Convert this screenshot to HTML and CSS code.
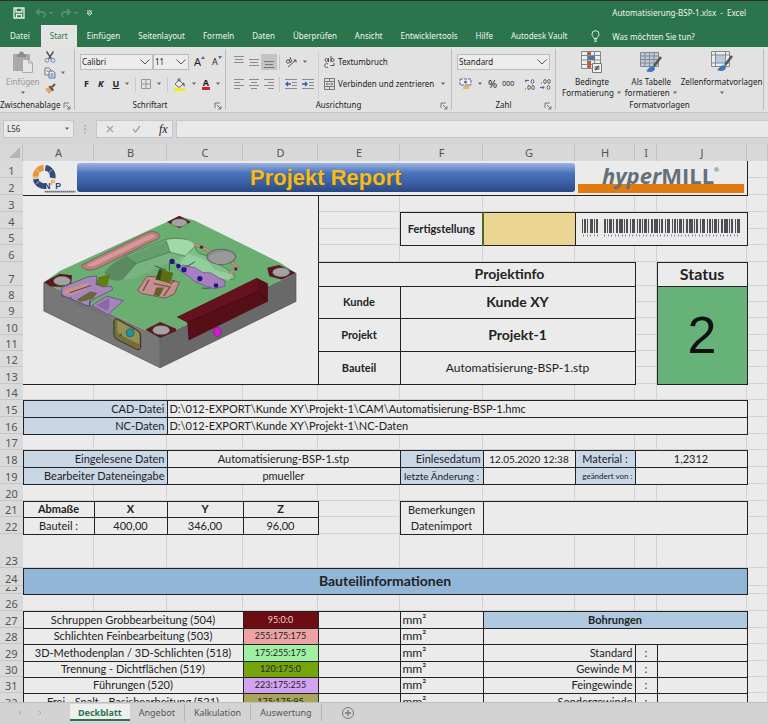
FILE: index.html
```html
<!DOCTYPE html>
<html lang="de">
<head>
<meta charset="utf-8">
<title>Automatisierung-BSP-1.xlsx - Excel</title>
<link rel="stylesheet" href="styles.css">
</head>
<body>
<svg class="defs" width="0" height="0" aria-hidden="true">
  <symbol id="chev" viewBox="0 0 10 6"><path d="M.5.5 5 5 9.500.5" fill="none" stroke="#555"/></symbol>
  <symbol id="drop" viewBox="0 0 6 4"><path d="M1 .5h4L3 3z" fill="#666"/></symbol>
  <symbol id="launch" viewBox="0 0 8 8"><path d="M1 6V1h5M3 3l4 4M7 4v3H4" fill="none" stroke="#777"/></symbol>
</svg>
<header class="top">
  <div class="title">
    <div class="quick">
      <button aria-label="Speichern"><svg width="12" height="12" viewBox="0 0 12 12"><path d="M1 1h10v10H1zM3 1v4h6V1M3.500 11V7.500h5V11" fill="none" stroke="#e8f0ea" stroke-width="1.300"/></svg></button>
      <button aria-label="Rückgängig"><svg width="18" height="10" viewBox="0 0 18 10"><path d="M4.500 1 1.500 4l3 3M1.500 4H7c4 0 4 4 1 5" fill="none" stroke="#5d9777" stroke-width="1.300"/><path d="M14 4h4l-2 2z" fill="#5d9777"/></svg></button>
      <button aria-label="Wiederholen"><svg width="18" height="10" viewBox="0 0 18 10"><path d="m7 1 3 3-3 3M10 4H5C1 4 1 8 3.500 9" fill="none" stroke="#5d9777" stroke-width="1.300"/><path d="M14 4h4l-2 2z" fill="#5d9777"/></svg></button>
      <button aria-label="Anpassen"><svg width="7" height="7" viewBox="0 0 7 7"><path d="M1 1h5M1 3h5L3.500 5.500z" fill="none" stroke="#dce9e0"/></svg></button>
    </div>
    <h1>Automatisierung-BSP-1.xlsx&nbsp; -&nbsp; Excel</h1>
  </div>
  <nav class="tabs">
    <a href="#">Datei</a><a href="#" class="on">Start</a><a href="#">Einfügen</a><a href="#">Seitenlayout</a><a href="#">Formeln</a><a href="#">Daten</a><a href="#">Überprüfen</a><a href="#">Ansicht</a><a href="#">Entwicklertools</a><a href="#">Hilfe</a><a href="#">Autodesk Vault</a>
    <a href="#" class="tell"><svg width="9" height="12" viewBox="0 0 9 12"><path d="M3 8.500C3 7 1 6.500 1 4.200a3.500 3.500 0 0 1 7 0C8 6.500 6 7 6 8.500zM3 10h3M3.500 11.500h2" fill="none" stroke="#e4efe8"/></svg>Was möchten Sie tun?</a>
  </nav>
</header>

<section class="ribbon">
  <div class="group clip">
    <div class="body">
      <button class="big dim"><svg width="22" height="23" viewBox="0 0 22 23"><path d="M1 3h17v17H1z" fill="#aaa"/><path d="M5 3h2a2.500 2.500 0 0 1 5 0h2v3H5z" fill="#8d8d8d"/><path d="M10.500 8.500H17l3.500 3.500v9.500h-10z" fill="#e6e6e6" stroke="#aaa"/><path d="M16.500 8.500V12H20" fill="none" stroke="#aaa"/></svg>Einfügen<svg class="dd" width="6" height="4"><use href="#drop"/></svg></button>
      <div class="stack">
        <button aria-label="Ausschneiden"><svg width="12" height="12" viewBox="0 0 12 12"><path d="m2.500.5 5 7.500M9.500.5 4.500 8" stroke="#555" stroke-width="1.400"/><circle cx="3" cy="9.300" r="2" fill="none" stroke="#6f8fb5"/><circle cx="9" cy="9.300" r="2" fill="none" stroke="#6f8fb5"/></svg></button>
        <button aria-label="Kopieren"><svg width="12" height="12" viewBox="0 0 12 12"><path d="M1 1h4l2 2v5H1z" fill="#eee" stroke="#777"/><path d="M5 4h4l2 2v5H5z" fill="#e4eaf2" stroke="#5b7594"/><path d="M6.500 7h3M6.500 9h3M2.500 4h2" stroke="#5b7594"/></svg><svg class="dd" width="6" height="4"><use href="#drop"/></svg></button>
        <button aria-label="Format übertragen"><svg width="12" height="12" viewBox="0 0 12 12"><path d="M1 6l4-2 3 4-3 3z" fill="#e9a35c"/><path d="m4.500 3.500 2-1 3.500 4-1.500 2z" fill="#555"/><path d="m8 4 3-3" stroke="#555" stroke-width="2"/></svg></button>
      </div>
    </div>
    <footer>Zwischenablage<button aria-label="Mehr"><svg width="8" height="8"><use href="#launch"/></svg></button></footer>
  </div>

  <div class="group font">
    <div class="body col">
      <div class="line">
        <div class="picks">
          <label class="pick name"><select aria-label="Schriftart"><option>Calibri</option></select><svg width="10" height="6"><use href="#chev"/></svg></label>
          <label class="pick size"><select aria-label="Schriftgrad"><option>11</option></select><svg width="10" height="6"><use href="#chev"/></svg></label>
        </div>
        <button class="grow" aria-label="Vergrößern">A<svg width="4" height="4" viewBox="0 0 4 4"><path d="M0 3h4L2 0z" fill="#4472a8"/></svg></button>
        <button class="grow less" aria-label="Verkleinern">A<svg width="4" height="4" viewBox="0 0 4 4"><path d="M0 0h4L2 3z" fill="#4472a8"/></svg></button>
      </div>
      <div class="line fmt">
        <button><b>F</b></button><button><b><i>K</i></b></button><button><b><u>U</u></b></button><svg class="dd" width="6" height="4"><use href="#drop"/></svg>
        <span class="sep"></span>
        <button aria-label="Rahmen"><svg width="10" height="10" viewBox="0 0 10 10"><path d="M.5.5h9v9h-9zM5 0v10M0 5h10" fill="none" stroke="#999"/></svg></button><svg class="dd" width="6" height="4"><use href="#drop"/></svg>
        <span class="sep"></span>
        <button aria-label="Füllfarbe"><svg width="13" height="13" viewBox="0 0 13 13"><path d="m2 6 4-4 4 4-4 3.500z" fill="#eee" stroke="#666"/><path d="M5 3V1h2v3" fill="none" stroke="#666"/><path d="M10 4c2 1 2 3 1.500 5L10 7z" fill="#5578a3"/><path d="M1 10h11v3H1z" fill="#f1ec1c"/></svg></button><svg class="dd" width="6" height="4"><use href="#drop"/></svg>
        <button class="tint" aria-label="Schriftfarbe">A</button><svg class="dd" width="6" height="4"><use href="#drop"/></svg>
      </div>
    </div>
    <footer>Schriftart<button aria-label="Mehr"><svg width="8" height="8"><use href="#launch"/></svg></button></footer>
  </div>

  <div class="group align">
    <div class="body">
      <div class="col left">
        <div class="line">
          <button aria-label="Oben"><svg width="10" height="12" viewBox="0 0 10 12"><path d="M0 .5h10M1 3.500h8M0 6.500h10" stroke="#8b8b8b"/></svg></button>
          <button aria-label="Mitte"><svg width="10" height="12" viewBox="0 0 10 12"><path d="M0 3.500h10M1 6.500h8M0 9.500h10" stroke="#8b8b8b"/></svg></button>
          <button class="held" aria-label="Unten"><svg width="10" height="12" viewBox="0 0 10 12"><path d="M0 5.500h10M1 8.500h8M0 11.500h10" stroke="#777"/></svg></button>
          <span class="sep"></span>
          <button aria-label="Ausrichtung"><svg width="12" height="12" viewBox="0 0 12 12"><circle cx="3" cy="5.500" r="1.700" fill="none" stroke="#555"/><path d="M4 3l1.500 4M5 1l2 5M3 11l8-7M8.500 4H11v2.500" fill="none" stroke="#555"/></svg></button><svg class="dd" width="6" height="4"><use href="#drop"/></svg>
        </div>
        <div class="line">
          <button aria-label="Linksbündig"><svg width="10" height="10" viewBox="0 0 10 10"><path d="M0 .5h10M0 3.500h6M0 6.500h10M0 9.500h6" stroke="#8b8b8b"/></svg></button>
          <button aria-label="Zentriert"><svg width="10" height="10" viewBox="0 0 10 10"><path d="M0 .5h10M2 3.500h6M0 6.500h10M2 9.500h6" stroke="#8b8b8b"/></svg></button>
          <button aria-label="Rechtsbündig"><svg width="10" height="10" viewBox="0 0 10 10"><path d="M0 .5h10M4 3.500h6M0 6.500h10M4 9.500h6" stroke="#8b8b8b"/></svg></button>
          <span class="sep"></span>
          <button aria-label="Einzug verkleinern"><svg width="12" height="10" viewBox="0 0 12 10"><path d="M0 .5h12M7 3.500h5M7 6.500h5M0 9.500h12" stroke="#8b8b8b"/><path d="M6 5H1m2-2L1 5l2 2" fill="none" stroke="#35619c" stroke-width="1.300"/></svg></button>
          <button aria-label="Einzug vergrößern"><svg width="12" height="10" viewBox="0 0 12 10"><path d="M0 .5h12M7 3.500h5M7 6.500h5M0 9.500h12" stroke="#8b8b8b"/><path d="M0 5h5M3 3l2 2-2 2" fill="none" stroke="#35619c" stroke-width="1.300"/></svg></button>
        </div>
      </div>
      <div class="col right">
        <button class="text"><svg width="11" height="12" viewBox="0 0 11 12"><circle cx="2.500" cy="4" r="1.500" fill="none" stroke="#555"/><path d="M4.500 2v4M7 0v6M4 8a2 2 0 1 0 0 3M10 7v2.500H6.500" fill="none" stroke="#555"/><circle cx="8.500" cy="4" r="1.500" fill="none" stroke="#555"/></svg>Textumbruch</button>
        <button class="text"><svg width="11" height="12" viewBox="0 0 11 12"><path d="M.5.5h10v11H.5zM0 3.500h11M0 8.500h11M5.500 0v3M5.500 9v3M2 6h7M3.500 4.800 2 6l1.500 1.200M7.500 4.800 9 6 7.500 7.200" fill="none" stroke="#777"/></svg>Verbinden und zentrieren<svg class="dd" width="6" height="4"><use href="#drop"/></svg></button>
      </div>
    </div>
    <footer>Ausrichtung<button aria-label="Mehr"><svg width="8" height="8"><use href="#launch"/></svg></button></footer>
  </div>

  <div class="group number">
    <div class="body col">
      <div class="line"><label class="pick std"><select aria-label="Zahlenformat"><option>Standard</option></select><svg width="10" height="6"><use href="#chev"/></svg></label></div>
      <div class="line nums">
        <button aria-label="Währung"><svg width="13" height="12" viewBox="0 0 13 12"><path d="M1 1h11v6H1z" fill="#eef2f7" stroke="#4a6f9f" stroke-dasharray="3 1"/><circle cx="6.500" cy="4" r="1.500" fill="#4a6f9f"/><path d="M5 8h5M4 10h5M9 6v5" stroke="#e3a867" stroke-width="1.600"/></svg></button><svg class="dd" width="6" height="4"><use href="#drop"/></svg>
        <button class="pct">%</button><button class="tri">000</button><span class="sep"></span>
        <button class="dec" aria-label="Dezimalstelle hinzufügen"><svg width="11" height="11" viewBox="0 0 11 11"><path d="M5 1.500H1m1.500-1L1 2l1.500 1" fill="none" stroke="#3d6ba6"/><g fill="none" stroke="#666"><ellipse cx="8.500" cy="2.500" rx="1.300" ry="2"/><ellipse cx="5" cy="8.500" rx="1.300" ry="2"/><ellipse cx="9" cy="8.500" rx="1.300" ry="2"/></g><path d="M1 10h1" stroke="#666"/></svg></button>
        <button class="dec" aria-label="Dezimalstelle entfernen"><svg width="11" height="11" viewBox="0 0 11 11"><path d="M0 8.500h4M2.500 7 4 8.500 2.500 10" fill="none" stroke="#3d6ba6"/><g fill="none" stroke="#666"><ellipse cx="8.500" cy="8.500" rx="1.300" ry="2"/><ellipse cx="5" cy="2.500" rx="1.300" ry="2"/><ellipse cx="9" cy="2.500" rx="1.300" ry="2"/></g><path d="M1 4h1" stroke="#666"/></svg></button>
      </div>
    </div>
    <footer>Zahl<button aria-label="Mehr"><svg width="8" height="8"><use href="#launch"/></svg></button></footer>
  </div>

  <div class="group styles">
    <div class="body">
      <button class="big"><svg width="22" height="23" viewBox="0 0 22 23"><path d="M.5.5h19v17H.5zM6.500 0v18M13.500 0v18M0 4.500h20M0 9h20M0 13.500h20" fill="#eee" stroke="#888"/><path d="M7 1h3v3H7zM7 10h3v7H7z" fill="#c5573f"/><path d="M7 5h7v4H7z" fill="#4a76a8"/><path d="M11.500 12.500h9v9h-9z" fill="#f2f2f2" stroke="#777"/><path d="M13.500 16h5M13.500 18h5M17.500 14.500l-3 5" stroke="#333"/></svg>Bedingte<span>Formatierung<svg class="dd" width="6" height="4"><use href="#drop"/></svg></span></button>
      <button class="big"><svg width="22" height="23" viewBox="0 0 22 23"><path d="M.5 1.500h18v14H.5z" fill="#b8cbe0"/><path d="M.5 1.500h18v14H.5zM5 1v15M9.500 1v15M14 1v15M0 5h19M0 8.500h19M0 12h19" fill="none" stroke="#888"/><path d="m21 6-7 9" stroke="#555" stroke-width="2.500"/><path d="M6 20c2-1 3-5 7-5l2 2c0 4-5 5-9 3z" fill="#3f76b8"/></svg>Als Tabelle<span>formatieren<svg class="dd" width="6" height="4"><use href="#drop"/></svg></span></button>
      <button class="big"><svg width="22" height="23" viewBox="0 0 22 23"><path d="M.5.5h18v15H.5z" fill="#eee"/><path d="M5 4h10v8H5z" fill="#b8cbe0"/><path d="M.5.500h18v15H.5zM4.500 0v16M14.500 0v16M0 4h19M0 12h19" fill="none" stroke="#888"/><path d="m21 5-7 9" stroke="#555" stroke-width="2.500"/><path d="M6 19c2-1 3-5 7-5l2 2c0 4-5 5-9 3z" fill="#3f76b8"/></svg>Zellenformatvorlagen<svg class="dd" width="6" height="4"><use href="#drop"/></svg></button>
    </div>
    <footer>Formatvorlagen</footer>
  </div>
</section>

<section class="formula">
  <label class="ref"><input aria-label="Namenfeld" value="L56"><svg width="6" height="4"><use href="#drop"/></svg></label>
  <svg class="dots" width="2" height="10" viewBox="0 0 2 10"><path d="M1 1v8" stroke="#999" stroke-width="1.500" stroke-dasharray="1.500 2"/></svg>
  <div class="ops">
    <button aria-label="Abbrechen"><svg width="8" height="8" viewBox="0 0 8 8"><path d="m1 1 6 6M7 1 1 7" stroke="#a3a3a3" stroke-width="1.300"/></svg></button>
    <button aria-label="Eingeben"><svg width="9" height="8" viewBox="0 0 9 8"><path d="m1 4 2.500 3L8 1" fill="none" stroke="#a3a3a3" stroke-width="1.300"/></svg></button>
    <button class="fx"><i>fx</i></button>
  </div>
  <input class="bar" aria-label="Bearbeitungsleiste">
</section>

<main class="sheet">
<table>
<colgroup><col class="w0"><col class="wa"><col class="wb"><col class="wc"><col class="wd"><col class="we"><col class="wf"><col class="wg"><col class="wh"><col class="wi"><col class="wj"><col></colgroup>
<thead><tr><th><svg width="11" height="11" viewBox="0 0 11 11"><path d="M11 0v11H0z" fill="#b5b5b5"/></svg></th><th>A</th><th>B</th><th>C</th><th>D</th><th>E</th><th>F</th><th>G</th><th>H</th><th>I</th><th>J</th><th></th></tr></thead>
<tbody>
<tr class="h17"><th>1</th><td class="b masthead" colspan="10" rowspan="2">
  <div class="mast">
    <svg class="logo" width="46" height="30" viewBox="0 0 138 90"><g fill="none" stroke-width="17"><path d="M17 45A27 27 0 0 1 42 14" stroke="#e8953a"/><path d="M46 14A27 27 0 0 1 68 45" stroke="#354b80"/><path d="M17 48A27 27 0 0 0 48 69" stroke="#354b80"/></g><path d="M8 42h18M42 5v18M18 19l14 14M66 20 54 32M18 64l12-12" stroke="#f0f0f0" stroke-width="2"/><text x="43" y="78" class="lg">N</text><text x="62" y="67" class="lp">P</text><text x="76" y="78" class="lg">P</text><path d="M44 86h92" stroke="#666d80" stroke-width="5" stroke-dasharray="5 1"/></svg>
    <h2>Projekt Report</h2>
    <div class="hyper"><span><i>hyper</i>MILL<sup>®</sup></span></div>
  </div></td><td></td></tr>
<tr class="h17"><th>2</th><td></td></tr>
<tr class="h17"><th>3</th><td class="b model" colspan="4" rowspan="11">
<svg viewBox="70 166 885 563" role="img" aria-label="Bauteil">
<path d="M130 424 482 590V683L130 511z" fill="#777"/>
<path d="M482 590 893 396V482L482 683z" fill="#696969"/>
<path d="M130 424 178 390 540 224 586 237 845 365 893 396 482 590z" fill="#6aae72"/>
<path d="M130 424 178 398 215 403 213 427 185 438 150 437zM503 242 540 223 575 242 540 260zM806 380 842 372 893 396 850 416 812 406zM437 568 482 544 530 565 530 572 482 593z" fill="#5c1720"/>
<g fill="#a3a3a3" stroke="#444"><ellipse cx="185" cy="420" rx="26" ry="14"/><ellipse cx="540" cy="244" rx="24" ry="12"/><ellipse cx="848" cy="394" rx="26" ry="14"/><ellipse cx="485" cy="569" rx="26" ry="14"/></g>
<path d="M246 371 440 275c20-10 42-1 41 10-2 8-10 10-20 14L288 384c-20 8-48 0-42-13z" fill="#b97f80" stroke="#6d4c4c" stroke-width="2"/>
<path d="M260 372 448 281c10-3 20 0 18 6L285 374c-10 4-20 3-25-2z" fill="#d59a98"/>
<path d="M316 395c10-20 40-35 70-55l110-45c40-12 90 4 92 20 2 20 10 22 38 30l26 22c20 8 40 20 54 35 6 10-4 16-20 14l-40-6-120-44-40-2-96 44c-40 16-70 10-74-13z" fill="#7fbf88" stroke="#3f6b46" stroke-width="2"/>
<path d="M316 395c10-20 40-38 62-48l32 20-44 50c-26 4-46-4-50-22z" fill="#5b8a62"/>
<path d="M378 347 500 297l12 36-102 34z" fill="#659f6d"/>
<path d="m410 367 102-34 46 12-60 24-90 42-44 6z" fill="#78b381"/>
<path d="M500 297c40-10 84 0 88 16l-30 32-46-12z" fill="#a1d9a8"/>
<path d="m378 347 32 20-44 50M410 367l102-34-12-36M512 333l46 12 30-30" fill="none" stroke="#416e49" stroke-width="2"/>
<path d="M566 336 624 360 650 388 700 400 690 420 600 392 540 372z" fill="#9bd2a2" opacity=".8"/>
<path d="m534 384 16-12 38 8 22 14 26 2 22 14 20 10 0 16-34 8-28-10-32-14-18-16z" fill="#a87fc0" stroke="#6e4c86" stroke-width="2"/>
<path d="m584 307 36 16 14 10M700 364l16 14-10 14-18 2" fill="none" stroke="#9d7368" stroke-width="9"/>
<path d="m584 307 36 16 14 10M700 364l16 14-10 14-18 2" fill="none" stroke="#bc9185" stroke-width="6"/>
<ellipse cx="667" cy="347" rx="44" ry="23" fill="#8d8d8d" stroke="#444" stroke-width="2"/>
<path d="M630 350c5-18 70-26 76-4-4 28-68 32-76 4z" fill="#999"/>
<g fill="#1b1a7a"><circle cx="518" cy="361" r="8"/><circle cx="537" cy="375" r="7"/><circle cx="554" cy="386" r="8"/><circle cx="602" cy="413" r="8"/><circle cx="651" cy="434" r="7"/></g><circle cx="607" cy="318" r="5" fill="#333"/><circle cx="711" cy="384" r="5" fill="#333"/>
<path d="m466 375 34 12M510 368v22M588 362l-36 20M608 442h26" stroke="#355" stroke-width="3"/>
<path d="m414 448 28-42 34 2 64 16-16 36-28 12-70-14z" fill="#c58f8e" stroke="#603838" stroke-width="2"/>
<path d="m430 450 18-34M512 430l14-12M492 466l20-28-50-10" fill="none" stroke="#7b4c4c" stroke-width="4"/>
<path d="m470 440 24 0-14 26-18-2z" fill="#65612d"/>
<path d="m480 384 42 12-10 32-44-12z" fill="#596d12"/><path d="m480 384 8 2-6 32-14-2z" fill="#38480f"/>
<path d="m296 410 32-8-6 30-20 8-14-8z" fill="#657d11" stroke="#405008"/>
<path d="M184 440 262 408 290 405 288 430 310 438 335 436 338 446 268 482 268 500 184 464z" fill="#a785bd" stroke="#53405f" stroke-width="2"/>
<path d="m192 446 66-20 14 10-60 28-24-6z" fill="#c89189"/><path d="m230 476 40-24 22 4-14 18-38 10z" fill="#686936"/>
<path d="m208 456 64-22M184 464l84 34 2-18M212 468l-2 8" fill="none" stroke="#4f3b59" stroke-width="3"/>
<path d="m276 494 44-28 50 14-46 42z" fill="#a584bd" stroke="#5b4270" stroke-width="2"/><path d="m288 494 40-22 0 30-8 8z" fill="#8a68a2"/>
<path d="M184 464 268 498 276 494 324 522 324 530 230 494z" fill="#727272"/>
<path d="M342 542q2-10 12-6l60 34q10 6 9 16v34q-2 12-14 6l-56-28q-12-6-11-16z" fill="#736f3a" stroke="#33321d" stroke-width="3"/>
<path d="m352 540 60 32q8 6 7 14v26l-58-28q-10-6-9-16z" fill="#949055"/>
<circle cx="391" cy="577" r="12" fill="#21939b" stroke="#175057" stroke-width="2"/><circle cx="362" cy="584" r="4" fill="#55522a"/>
<path d="M533 529 775 411 808 428V482L568 600 564 546z" fill="#560e17"/>
<path d="m533 529 32 17 210-92V411z" fill="#63121e"/><path d="M565 546 775 454 808 478" fill="none" stroke="#38080e" stroke-width="2"/>
<ellipse cx="655" cy="574" rx="12" ry="14" fill="#d21cc6" stroke="#861583" stroke-width="2"/>
<path d="M130 424V511L482 683 893 482V396M482 590v93" fill="none" stroke="#4c4c4c" stroke-width="2"/>
</svg></td><td></td><td></td><td></td><td></td><td></td><td></td><td></td></tr>
<tr class="h17"><th>4</th><td></td><td class="b c" rowspan="2"><b>Fertigstellung</b></td><td class="b gold" rowspan="2"></td><td class="b c" colspan="3" rowspan="2"><svg class="code" width="158" height="19" viewBox="0 0 158 19"><g stroke="#33343b" opacity=".85"><path d="M0 7h16" stroke-width="14" stroke-dasharray="1 1 2 1 1 2 3 1"/><path d="M22 7h136" stroke-width="14" stroke-dasharray="2 1 1 1 3 1 1 2 2 1 4 1 1 1 2 2 1 1 3 2 1 1"/><path d="M1 16.500h16M22 16.500h136" stroke-width="2" stroke-dasharray="1 3 1 2" opacity=".6"/></g></svg></td><td></td></tr>
<tr class="h16"><th>5</th><td></td><td></td></tr>
<tr class="h17"><th>6</th><td></td><td></td><td></td><td></td><td></td><td></td><td></td></tr>
<tr class="h24"><th>7</th><td class="b c m info" colspan="4"><b>Projektinfo</b></td><td></td><td class="b c l"><b>Status</b></td><td></td></tr>
<tr class="h16"><th>8</th><td class="b c" rowspan="2"><b>Kunde</b></td><td class="b c m" colspan="3" rowspan="2"><b>Kunde XY</b></td><td></td><td class="b c two" rowspan="6">2</td><td></td></tr>
<tr class="h16"><th>9</th><td></td><td></td></tr>
<tr class="h17"><th>10</th><td class="b c" rowspan="2"><b>Projekt</b></td><td class="b c m" colspan="3" rowspan="2"><b>Projekt-1</b></td><td></td><td></td></tr>
<tr class="h16"><th>11</th><td></td><td></td></tr>
<tr class="h16"><th>12</th><td class="b c" rowspan="2"><b>Bauteil</b></td><td class="b c n" colspan="3" rowspan="2">Automatisierung-BSP-1.stp</td><td></td><td></td></tr>
<tr class="h17"><th>13</th><td></td><td></td></tr>
<tr class="h16"><th>14</th><td></td><td></td><td></td><td></td><td></td><td></td><td></td><td></td><td></td><td></td><td></td></tr>
<tr class="h17"><th>15</th><td class="b r blue" colspan="2">CAD-Datei</td><td class="b" colspan="8">D:\012-EXPORT\Kunde XY\Projekt-1\CAM\Automatisierung-BSP-1.hmc</td><td></td></tr>
<tr class="h17"><th>16</th><td class="b r blue" colspan="2">NC-Daten</td><td class="b" colspan="8">D:\012-EXPORT\Kunde XY\Projekt-1\NC-Daten</td><td></td></tr>
<tr class="h16"><th>17</th><td></td><td></td><td></td><td></td><td></td><td></td><td></td><td></td><td></td><td></td><td></td></tr>
<tr class="h17"><th>18</th><td class="b r blue" colspan="2">Eingelesene Daten</td><td class="b c" colspan="3">Automatisierung-BSP-1.stp</td><td class="b r blue">Einlesedatum</td><td class="b c date">12.05.2020 12:38</td><td class="b c blue">Material :</td><td class="b c" colspan="2">1,2312</td><td></td></tr>
<tr class="h17"><th>19</th><td class="b r blue" colspan="2">Bearbeiter Dateneingabe</td><td class="b c" colspan="3">pmueller</td><td class="b c blue date">letzte Änderung :</td><td class="b"></td><td class="b r blue tiny">geändert von :</td><td class="b" colspan="2"></td><td></td></tr>
<tr class="h17"><th>20</th><td></td><td></td><td></td><td></td><td></td><td></td><td></td><td></td><td></td><td></td><td></td></tr>
<tr class="h16"><th>21</th><td class="b c"><b>Abmaße</b></td><td class="b c"><b>X</b></td><td class="b c"><b>Y</b></td><td class="b c"><b>Z</b></td><td></td><td class="b c two-line" rowspan="2">Bemerkungen Datenimport</td><td class="b" colspan="4" rowspan="2"></td><td></td></tr>
<tr class="h17"><th>22</th><td class="b c">Bauteil :</td><td class="b c">400,00</td><td class="b c">346,00</td><td class="b c">96,00</td><td></td><td></td></tr>
<tr class="h34"><th>23</th><td></td><td></td><td></td><td></td><td></td><td></td><td></td><td></td><td></td><td></td><td></td></tr>
<tr class="h18"><th>24</th><td class="b c m deep" colspan="10" rowspan="2"><b>Bauteilinformationen</b></td><td></td></tr>
<tr class="h8"><th><span class="cut">25</span></th><td></td></tr>
<tr class="h17"><th>26</th><td></td><td></td><td></td><td></td><td></td><td></td><td></td><td></td><td></td><td></td><td></td></tr>
<tr class="h17"><th>27</th><td class="b c" colspan="3">Schruppen Grobbearbeitung (504)</td><td class="b c s k1">95:0:0</td><td class="b"></td><td class="b n">mm²</td><td class="b c blue2" colspan="4"><b>Bohrungen</b></td><td></td></tr>
<tr class="h16"><th>28</th><td class="b c" colspan="3">Schlichten Feinbearbeitung (503)</td><td class="b c s k2">255:175:175</td><td class="b"></td><td class="b n">mm²</td><td class="b" colspan="4"></td><td></td></tr>
<tr class="h17"><th>29</th><td class="b c" colspan="3">3D-Methodenplan / 3D-Schlichten (518)</td><td class="b c s k3">175:255:175</td><td class="b"></td><td class="b n">mm²</td><td class="b r" colspan="2">Standard</td><td class="b c">:</td><td class="b"></td><td></td></tr>
<tr class="h16"><th>30</th><td class="b c" colspan="3">Trennung - Dichtflächen (519)</td><td class="b c s k4">120:175:0</td><td class="b"></td><td class="b n">mm²</td><td class="b r" colspan="2">Gewinde M</td><td class="b c">:</td><td class="b"></td><td></td></tr>
<tr class="h16"><th>31</th><td class="b c" colspan="3">Führungen (520)</td><td class="b c s k5">223:175:255</td><td class="b"></td><td class="b n">mm²</td><td class="b r" colspan="2">Feingewinde</td><td class="b c">:</td><td class="b"></td><td></td></tr>
<tr class="h17"><th>32</th><td class="b c" colspan="3">Frei - Spalt - Basisbearbeitung (521)</td><td class="b c s k6">175:175:95</td><td class="b"></td><td class="b n">mm²</td><td class="b r" colspan="2">Sondergewinde</td><td class="b c">:</td><td class="b"></td><td></td></tr>
</tbody>
</table>
</main>

<nav class="sheets">
  <div class="arrows"><button aria-label="Zurück"><svg width="4" height="6" viewBox="0 0 4 6"><path d="M3 1 1 3l2 2" fill="none" stroke="#aaa"/></svg></button><button aria-label="Weiter"><svg width="4" height="6" viewBox="0 0 4 6"><path d="m1 1 2 2-2 2" fill="none" stroke="#aaa"/></svg></button></div>
  <a href="#" class="on">Deckblatt</a><a href="#">Angebot</a><a href="#">Kalkulation</a><a href="#">Auswertung</a>
  <button class="add" aria-label="Neues Blatt"><svg width="12" height="12" viewBox="0 0 12 12"><circle cx="6" cy="6" r="5.500" fill="none" stroke="#777"/><path d="M6 3v6M3 6h6" stroke="#777" stroke-width="1.300"/></svg></button>
</nav>
</body>
</html>
```
FILE: styles.css
```css
* { box-sizing: border-box; }
body {
  margin: 0;
  height: 100vh;
  display: flex;
  flex-direction: column;
  overflow: hidden;
  background: #d6d6d6;
  color: #222;
  font: 8px/12px "Noto Sans", "Open Sans", sans-serif;
}
.defs { position: absolute; }
button { border: 0; padding: 0; background: none; font: inherit; color: inherit; }
a { color: inherit; text-decoration: none; }
svg { display: block; flex: none; }

/* title bar and ribbon tabs */
.top { background: #2b744c; color: #eef6f0; border-top: 1px solid #2e2e2e; }
.title { display: flex; justify-content: space-between; align-items: center; height: 24px; padding: 0 22px 0 13px; }
.title h1 { margin: 0; font-size: 8px; font-weight: 400; }
.quick { display: flex; align-items: center; gap: 7px; }
.quick button:nth-child(2) { margin-left: 3px; }
.quick button:last-child { margin-left: 1px; }
.tabs { display: flex; height: 22px; line-height: 21px; padding-left: 1px; }
.tabs a { padding: 0 9px; white-space: nowrap; }
.tabs .on { background: #e4e4e4; color: #2b744c; margin: 0 1px 0 2px; }
.tabs .tell { display: flex; align-items: center; gap: 12px; margin-left: 6px; }

/* ribbon */
.ribbon { display: flex; height: 66px; background: #e2e2e2; border-bottom: 1px solid #c8c8c8; }
.group { display: flex; flex-direction: column; position: relative; margin: 2px 0; border-right: 1px solid #bdbdbd; }
.body { display: flex; flex: 1; min-height: 0; }
.col { display: flex; flex-direction: column; }
.line { display: flex; align-items: center; height: 22px; }
.group footer { display: flex; justify-content: center; height: 11px; }
.group footer button { position: absolute; right: 3px; bottom: 0; }
.sep { width: 1px; height: 15px; background: #c8c8c8; }
.clip { width: 75px; }
.font { width: 151px; }
.align { width: 226px; }
.number { width: 104px; }
.styles { width: 208px; }
.clip footer { justify-content: flex-start; }
.clip .body { padding: 2px 0 0 6px; gap: 4px; }
.big { display: flex; flex-direction: column; align-items: center; white-space: nowrap; line-height: 11px; }
.big > svg:first-child { margin-bottom: 2px; }
.big span { display: flex; align-items: center; gap: 2px; }
.big > .dd { margin-top: 4px; }
.dim { color: #999; }
.stack { display: flex; flex-direction: column; gap: 4px; }
.stack button { display: flex; align-items: center; gap: 4px; }
.font .body { padding: 2px 0 0 5px; }
.picks { display: flex; }
.pick { display: flex; align-items: center; height: 16px; border: 1px solid #bcbcbc; background: #ececec; padding: 0 2px 0 1px; }
.pick select { flex: 1; min-width: 0; appearance: none; border: 0; padding: 0; background: none; font: inherit; color: inherit; }
.name { width: 73px; }
.size { width: 36px; }
.grow { display: flex; margin-left: 5px; font-size: 11px; }
.less { font-size: 9px; margin-left: 7px; }
.fmt { padding: 0 4px; gap: 5px; font-size: 9px; }
.fmt button:nth-child(2), .fmt button:nth-child(3) { margin-left: 4px; }
.fmt .tint { font-weight: 700; line-height: 9px; width: 11px; border-bottom: 3px solid #d8202a; }
.align .body { padding-top: 2px; }
.left { flex: none; width: 93px; padding-left: 8px; border-right: 1px solid #d0d0d0; }
.left .line { gap: 5px; }
.left .held { background: #c3c3c3; padding: 2px 3px; margin: 0 -3px; }
.right { padding-left: 5px; }
.text { display: flex; align-items: center; gap: 3px; height: 22px; white-space: nowrap; }
.text .dd { margin-left: 3px; }
.number .body { padding: 2px 5px 0; }
.std { flex: 1; }
.nums { gap: 5px; padding-left: 2px; }
.pct { font-size: 11px; }
.tri { font-size: 7px; }
.styles .body { padding: 2px 0 0 6px; gap: 3px; }

/* formula bar */
.formula { display: flex; align-items: center; height: 31px; padding: 0 0 0 3px; }
.ref, .ops, .bar { height: 18px; background: #e9e9e9; border: 1px solid #c6c6c6; }
.ref { display: flex; align-items: center; width: 71px; padding: 0 3px; }
.ref input { flex: 1; min-width: 0; border: 0; padding: 0; background: none; font: inherit; color: #333; }
.dots { margin: 0 10px; }
.ops { display: flex; align-items: center; gap: 18px; width: 77px; padding: 0 9px; }
.fx { font: 12px/12px "Liberation Serif", serif; }
.bar { flex: 1; min-width: 0; margin-left: 3px; border-right: 0; padding: 0 4px; }

/* worksheet */
.sheet { flex: 1; min-height: 0; overflow: hidden; background: #ebebeb; }
.sheet table { width: 100%; table-layout: fixed; border-collapse: collapse; font: 11px/14px Lato, "Open Sans", sans-serif; }
.w0 { width: 23px; } .wa { width: 71px; } .wb { width: 73px; } .wc { width: 76px; }
.wd { width: 75px; } .we { width: 82px; } .wf { width: 83px; } .wg { width: 92px; }
.wh { width: 60px; } .wi { width: 22px; } .wj { width: 90px; }
.sheet th { padding: 0; font: 11px/14px "Noto Sans", sans-serif; vertical-align: bottom; color: #555; background: linear-gradient(#c6c6c6, #c6c6c6) bottom / 100% 1px no-repeat, #dadada; }
.sheet thead th { height: 17px; vertical-align: middle; background: linear-gradient(#c0c0c0, #c0c0c0) right / 1px 100% no-repeat, #d8d8d8; }
.sheet thead svg { margin-left: 9px; }
.sheet td {
  padding: 0 2px;
  white-space: nowrap;
  background: linear-gradient(#d2d2d2, #d2d2d2) bottom / 100% 1px no-repeat, linear-gradient(#d2d2d2, #d2d2d2) right / 1px 100% no-repeat;
}
.sheet .b { border: 1px solid #222; background: #ebebeb; }
.sheet .c { text-align: center; }
.sheet .r { text-align: right; }
.sheet .s { font-size: 9px; }
.sheet .date { font-size: 10px; }
.sheet .n { font-size: 12px; }
.sheet .m { font-size: 14px; }
.sheet .l { font-size: 16px; }
.sheet .tiny { font-size: 8px; }
.h8 { height: 8px; } .h16 { height: 16px; } .h17 { height: 17px; } .h18 { height: 18px; }
.h24 { height: 24px; } .h34 { height: 34px; }
.sheet .blue { background: #c9d6e6; }
.sheet .blue2 { background: #b0c8e0; }
.sheet .deep { background: #92b6d8; }
.sheet .gold { background: #ebd592; border-left: 2px solid #4c6b22; }
.sheet .info { padding-left: 68px; }
.sheet .two { background: #67b279; color: #111; font: 52px/56px "Liberation Sans", sans-serif; }
.sheet .two-line { white-space: normal; line-height: 16px; }
.sheet .k1 { background: #6c0c13; color: #e6d5d5; }
.sheet .k2 { background: #eda3a4; }
.sheet .k3 { background: #9ff0a2; }
.sheet .k4 { background: #75a50b; }
.sheet .k5 { background: #d1a3f0; }
.sheet .k6 { background: #a8a55d; }
.cut { display: flex; align-items: flex-end; justify-content: center; height: 7px; overflow: hidden; }
.code { margin: 0 auto; }
.sheet .model { padding: 0; border-left: 0; }
.model svg { width: 100%; height: 186px; }
.sheet .masthead { padding: 0; border-left: 0; border-top: 0; }
.mast { display: flex; align-items: center; height: 32px; }
.logo { margin: 0 1px 0 7px; }
.lg, .lp { font: 700 26px "Liberation Sans", sans-serif; fill: #2f4276; }
.lp { fill: #e8953a; font-size: 20px; }
.mast h2 {
  flex: 1;
  margin: 0;
  border-radius: 3px;
  background: linear-gradient(#9db4e0, #4a72bb 35%, #3d62a8 65%, #2a4784);
  color: #eebc2c;
  text-align: center;
  font: 700 22px/29px "Liberation Sans", sans-serif;
  text-shadow: 1px 1px 1px #665a3c;
}
.hyper { width: 166px; height: 31px; margin: 0 3px; text-align: center; background: linear-gradient(#e07b10, #e07b10) bottom / 100% 9px no-repeat; color: #667077; font: 700 22px/26px "Open Sans", sans-serif; }
.hyper sup { font-size: 6px; line-height: 6px; vertical-align: 12px; }

/* sheet tabs */
.sheets { display: flex; align-items: center; height: 22px; padding-bottom: 2px; border-top: 1px solid #bdbdbd; background: #d3d3d3; font-size: 9px; color: #555; }
.arrows { display: flex; width: 70px; gap: 16px; padding-left: 18px; }
.sheets a { height: 17px; line-height: 17px; padding: 0 9px; border-right: 1px solid #b5b5b5; }
.sheets .on { padding: 0 8px; background: #eee; color: #2b744c; font-weight: 700; border-right: 0; border-bottom: 2px solid #2b744c; }
.add { margin-left: 20px; }
```
